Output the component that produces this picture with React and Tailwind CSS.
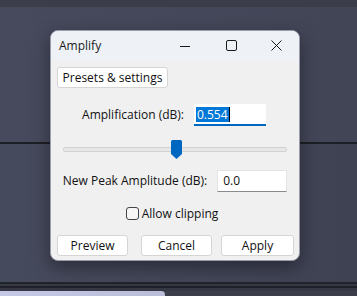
import React from "react";

function Thumb() {
  return (
    <svg width="11" height="19" viewBox="0 0 11 19" className="block">
      <path d="M1.5 0 H9.5 Q11 0 11 1.5 V14 L5.5 19 L0 14 V1.5 Q0 0 1.5 0 Z" fill="#0067c0" />
    </svg>
  );
}

function CaptionButtons() {
  return (
    <div className="flex h-full">
      <div className="w-[46px] h-full flex items-center justify-center">
        <svg width="10" height="10" viewBox="0 0 10 10">
          <path d="M0 5.5 H10" stroke="#1a1a1a" strokeWidth="1" />
        </svg>
      </div>
      <div className="w-[46px] h-full flex items-center justify-center">
        <svg width="11" height="11" viewBox="0 0 11 11">
          <rect x="0.5" y="0.5" width="10" height="10" rx="1.5" fill="none" stroke="#1a1a1a" strokeWidth="1" />
        </svg>
      </div>
      <div className="w-[45px] h-full flex items-center justify-center">
        <svg width="11" height="11" viewBox="0 0 11 11">
          <path d="M0.5 0.5 L10.5 10.5 M10.5 0.5 L0.5 10.5" stroke="#1a1a1a" strokeWidth="1" />
        </svg>
      </div>
    </div>
  );
}

function Btn({ children, className = "" }) {
  return (
    <div
      className={
        "h-[21px] flex items-center justify-center rounded-[3px] bg-white border border-[#d5d5d5] text-[12px] text-[#111]" +
        " " +
        className
      }
    >
      {children}
    </div>
  );
}

export default function App() {
  return (
    <div
      className="relative w-[357px] h-[296px] overflow-hidden flex flex-col bg-[#444757]"
      style={{ fontFamily: '"Open Sans", "Noto Sans", Arial, sans-serif' }}
    >
      {/* desktop background */}
      <div className="h-[7px] bg-[#3b3d4b]" />
      <div className="h-[135px] bg-gradient-to-r from-[#474a5d] to-[#424556]" />
      <div className="h-[2px] bg-[#1d1f26]" />
      <div className="h-[138px] bg-gradient-to-r from-[#464a5d] to-[#3f4253]" />
      <div className="h-[2px] bg-[#22242c]" />
      <div className="h-[2px] bg-[#363844]" />
      <div className="h-[2px] bg-[#1f2128]" />
      <div className="h-[3px] bg-[#353743]" />
      <div className="flex-1 flex">
        <div className="w-[165px] bg-gradient-to-r from-[#c6c9e6] to-[#b9bdd8] rounded-tr-[4px]" />
        <div className="flex-1 bg-[#3b3d4a]" />
      </div>

      {/* Amplify dialog */}
      <div className="absolute left-[50px] top-[30px] w-[250px] h-[231px] rounded-[8px] overflow-hidden bg-[#f0f0f0] border border-[#9a9cab] shadow-[0_6px_18px_rgba(0,0,0,0.4)] flex flex-col">
        <div className="h-[29px] bg-[#eef2f7] flex items-center justify-between shrink-0">
          <span className="pl-[8px] text-[12px] text-[#1a1a1a]">Amplify</span>
          <CaptionButtons />
        </div>

        <div className="flex flex-col flex-1">
          <div className="pt-[7px] pl-[6px]">
            <Btn className="w-[111px] h-[20px]">Presets &amp; settings</Btn>
          </div>

          <div className="mt-[16px] flex items-center justify-center gap-[10px] pr-[2px]">
            <span className="text-[12px] text-[#111]">Amplification (dB):</span>
            <div className="w-[72px] h-[22px] bg-white border-b-2 border-[#0067c0] flex items-center pl-[2px]">
              <span className="bg-[#0078d7] text-white text-[12px] leading-[15px] px-[1px]">0.554</span>
              <span className="w-px h-[15px] bg-black" />
            </div>
          </div>

          <div className="mt-[14px] mx-[12px] h-[19px] relative">
            <div className="absolute left-0 right-0 top-[7px] h-[5px] rounded-[2px] bg-[#e7e7e7] border border-[#d2d2d2]" />
            <div className="absolute left-[108px] top-0">
              <Thumb />
            </div>
          </div>

          <div className="mt-[11px] flex items-center justify-center gap-[10px]">
            <span className="text-[12px] text-[#111]">New Peak Amplitude (dB):</span>
            <div className="w-[70px] h-[22px] bg-white border border-[#e3e3e3] border-b-[#8a8a8a] flex items-center pl-[5px] text-[12px] text-[#111]">
              0.0
            </div>
          </div>

          <div className="mt-[15px] h-[13px] flex items-center justify-center gap-[3px] pr-[6px]">
            <div className="w-[13px] h-[13px] rounded-[3px] border border-[#444] bg-[#f6f6f6]" />
            <span className="text-[12px] leading-[13px] text-[#111]">Allow clipping</span>
          </div>

          <div className="mt-[15px] flex pl-[6px] pr-[5px] justify-between">
            <Btn className="w-[71px]">Preview</Btn>
            <div className="flex gap-[9px]">
              <Btn className="w-[71px]">Cancel</Btn>
              <Btn className="w-[73px] border-[#2a7fd4]">Apply</Btn>
            </div>
          </div>
        </div>
      </div>
    </div>
  );
}
